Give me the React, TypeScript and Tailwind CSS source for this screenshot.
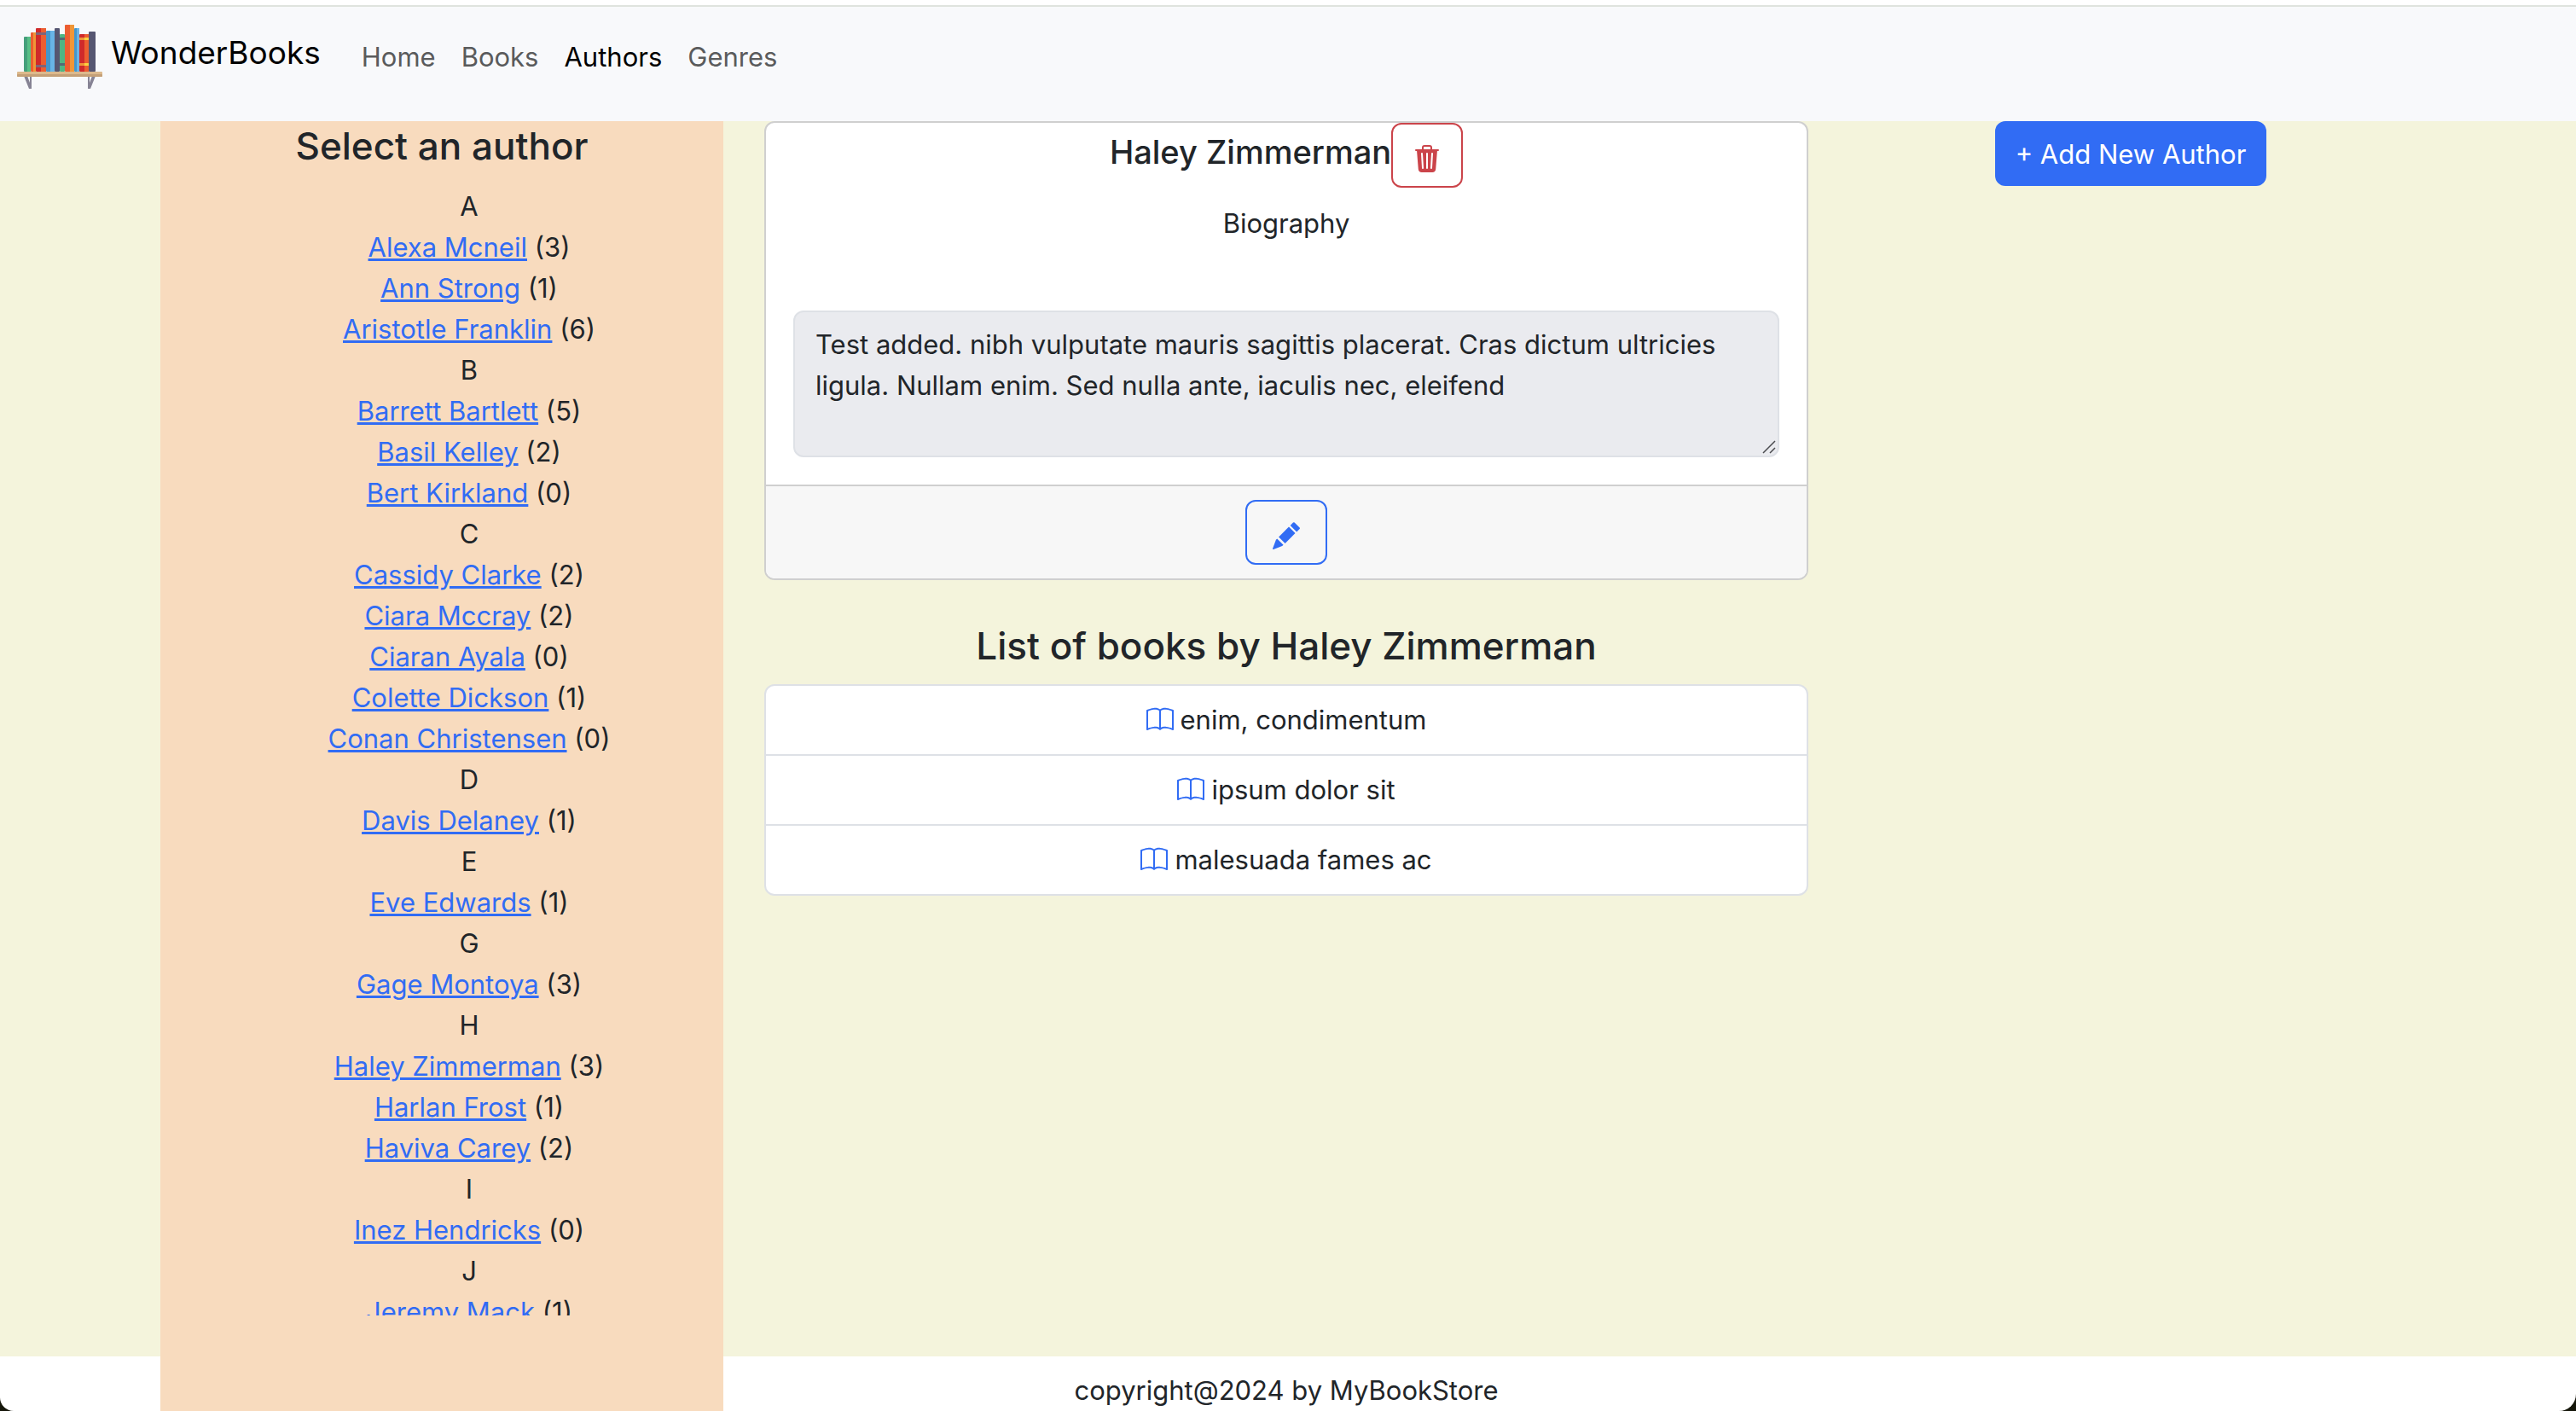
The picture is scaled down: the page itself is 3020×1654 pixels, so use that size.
import { BsBook, BsTrash3Fill } from "react-icons/bs";

type Author = { name: string; books: number };
type AuthorGroup = { letter: string; authors: Author[] };

const navItems = [
  { label: "Home", active: false },
  { label: "Books", active: false },
  { label: "Authors", active: true },
  { label: "Genres", active: false },
];

const groups: AuthorGroup[] = [
  {
    letter: "A",
    authors: [
      { name: "Alexa Mcneil", books: 3 },
      { name: "Ann Strong", books: 1 },
      { name: "Aristotle Franklin", books: 6 },
    ],
  },
  {
    letter: "B",
    authors: [
      { name: "Barrett Bartlett", books: 5 },
      { name: "Basil Kelley", books: 2 },
      { name: "Bert Kirkland", books: 0 },
    ],
  },
  {
    letter: "C",
    authors: [
      { name: "Cassidy Clarke", books: 2 },
      { name: "Ciara Mccray", books: 2 },
      { name: "Ciaran Ayala", books: 0 },
      { name: "Colette Dickson", books: 1 },
      { name: "Conan Christensen", books: 0 },
    ],
  },
  { letter: "D", authors: [{ name: "Davis Delaney", books: 1 }] },
  { letter: "E", authors: [{ name: "Eve Edwards", books: 1 }] },
  { letter: "G", authors: [{ name: "Gage Montoya", books: 3 }] },
  {
    letter: "H",
    authors: [
      { name: "Haley Zimmerman", books: 3 },
      { name: "Harlan Frost", books: 1 },
      { name: "Haviva Carey", books: 2 },
    ],
  },
  { letter: "I", authors: [{ name: "Inez Hendricks", books: 0 }] },
  { letter: "J", authors: [{ name: "Jeremy Mack", books: 1 }] },
];

const books = ["enim, condimentum", "ipsum dolor sit", "malesuada fames ac"];

function ShelfLogo() {
  return (
    <svg viewBox="0 0 100 78" className="h-[78px] w-[100px]" aria-hidden="true">
      <path d="M8 61h4l3 8v-8h2v15h-3z" fill="#868394" />
      <path d="M92 61h-4l-3 8v-8h-2v15h3z" fill="#868394" />
      <rect x="8" y="15" width="8" height="41" rx="1" fill="#459f7b" />
      <rect x="12" y="15" width="4" height="41" fill="#58bf86" />
      <rect x="16" y="10" width="6" height="46" rx="1" fill="#ec5d30" />
      <rect x="19" y="10" width="3" height="46" fill="#f09637" />
      <rect x="22" y="5" width="12" height="51" rx="1" fill="#cf2a2b" />
      <rect x="28" y="5" width="6" height="51" fill="#ec5d30" />
      <path d="M22 10h12v3H22zM22 48h12v3H22z" fill="#7f6478" />
      <rect x="34" y="8" width="10" height="48" rx="1" fill="#4396cb" />
      <rect x="39" y="8" width="5" height="48" fill="#69b4e6" />
      <rect x="44" y="5" width="6" height="51" rx="1" fill="#565671" />
      <rect x="50" y="12" width="6" height="44" rx="1" fill="#4fb583" />
      <path d="M50 16h6v3h-6zM50 46h6v3h-6z" fill="#526a75" />
      <rect x="56" y="1" width="11" height="55" rx="1" fill="#ec5d30" />
      <rect x="62" y="1" width="5" height="55" fill="#f09637" />
      <rect x="67" y="5" width="6" height="51" rx="1" fill="#4396cb" />
      <rect x="70" y="5" width="3" height="51" fill="#69b4e6" />
      <rect x="73" y="12" width="11" height="44" rx="1" fill="#cf2a2b" />
      <rect x="79" y="12" width="5" height="44" fill="#ec5d30" />
      <path d="M73 16h6v3h-6zM73 46h6v3h-6z" fill="#f09637" />
      <path d="M79 16h5v3h-5zM79 46h5v3h-5z" fill="#fbd13f" />
      <rect x="84" y="9" width="8" height="47" rx="1" fill="#565671" />
      <rect x="0" y="56" width="100" height="6" rx="1" fill="#dcb98c" />
      <rect x="0" y="59" width="100" height="3" rx="1" fill="#c4a077" />
    </svg>
  );
}

function PencilIcon() {
  return (
    <svg viewBox="0 0 32 32" className="size-8" fill="currentColor" aria-hidden="true">
      <path d="M24 .6q.8-.8 1.6 0l6 6q.7.7 0 1.5L28.200 11.400 20.700 4z" />
      <path d="M19 5.500 26.500 13 14.600 25 7.100 17.500z" />
      <path d="M5.200 19.400 12.600 26.800 11.200 28 1 31.900Q-.3 32.200.1 31L3.900 20.800z" />
    </svg>
  );
}

function Navbar() {
  return (
    <header className="flex h-[134px] shrink-0 items-start bg-[#f8f9fb] pt-5 pl-5">
      <a href="#" className="mr-12 flex items-start gap-[10px] text-[37px] leading-[68px] text-black">
        <ShelfLogo />
        WonderBooks
      </a>
      <nav className="flex gap-[30px] pt-2 text-[31px] leading-[62px]">
        {navItems.map((item) => (
          <a key={item.label} href="#" className={item.active ? "text-black" : "text-[#5a5b5c]"}>
            {item.label}
          </a>
        ))}
      </nav>
    </header>
  );
}

function AuthorList() {
  return (
    <aside className="relative z-10 h-[calc(100vh-142px)] bg-[#f8dbbe] text-center">
      <div className="h-[calc(100vh-254px)] overflow-x-hidden overflow-y-auto [scrollbar-width:none]">
        <h2 className="mb-[18px] text-[44px] leading-[58px] font-medium">Select an author</h2>
        <ul className="pl-16">
          {groups.map((group) => (
            <li key={group.letter}>
              {group.letter}
              <ul>
                {group.authors.map((author) => (
                  <li key={author.name}>
                    <a href="#" className="text-[#316cf4] underline decoration-[3px] underline-offset-2">
                      {author.name}
                    </a>{" "}
                    ({author.books})
                  </li>
                ))}
              </ul>
            </li>
          ))}
        </ul>
      </div>
    </aside>
  );
}

function AuthorCard() {
  return (
    <article className="overflow-hidden rounded-xl border-2 border-[#cfcfcf] bg-white text-center">
      <div className="flex items-start justify-center">
        <h3 className="pt-1.5 text-[38px] leading-[56px] font-medium">Haley Zimmerman</h3>
        <button
          type="button"
          aria-label="Delete author"
          className="flex h-[76px] items-center rounded-xl border-2 border-[#cb444a] px-6 pt-2 text-[#cb444a]"
        >
          <BsTrash3Fill className="size-8" />
        </button>
      </div>
      <label htmlFor="biography" className="mt-[18px] block">
        Biography
      </label>
      <div className="relative mx-8 mt-[78px] mb-8">
        <textarea
          id="biography"
          readOnly
          rows={3}
          className="block w-full resize-none rounded-xl border-2 border-[#dee1e6] bg-[#eaebef] px-6 pt-[14px] pb-[10px]"
          defaultValue="Test added. nibh vulputate mauris sagittis placerat. Cras dictum ultricies ligula. Nullam enim. Sed nulla ante, iaculis nec, eleifend"
        />
        <svg
          viewBox="0 0 16 16"
          className="pointer-events-none absolute right-1 bottom-1 size-4"
          fill="none"
          stroke="#4b4c4f"
          strokeWidth="1.5"
          aria-hidden="true"
        >
          <path d="M1 15 15 1M9 15l6-6" />
        </svg>
      </div>
      <div className="flex justify-center border-t-2 border-[#cfcfcf] bg-[#f7f7f7] py-4">
        <button
          type="button"
          aria-label="Edit biography"
          className="flex h-[76px] w-24 items-center justify-center rounded-xl border-2 border-[#316cf4] pt-2 text-[#316cf4]"
        >
          <PencilIcon />
        </button>
      </div>
    </article>
  );
}

function BookList() {
  return (
    <section className="mt-12 text-center">
      <h2 className="mb-4 text-[44px] leading-[58px] font-medium">List of books by Haley Zimmerman</h2>
      <ul className="divide-y-2 divide-[#dee1e6] overflow-hidden rounded-xl border-2 border-[#dee1e6] bg-white">
        {books.map((title) => (
          <li key={title} className="flex items-center justify-center gap-2 py-4">
            <BsBook className="size-8 text-[#316cf4]" />
            {title}
          </li>
        ))}
      </ul>
    </section>
  );
}

export default function App() {
  return (
    <div className="h-screen bg-[#15160a]">
      <div className="flex h-full flex-col overflow-hidden rounded-br-[20px] rounded-bl-[16px] bg-white font-['Inter',sans-serif] text-[31px] leading-[48px] text-[#212529]">
        <div className="h-2 shrink-0 border-b-2 border-[#dfe3de]" />
        <Navbar />
        <main className="h-[calc(100vh-206px)] shrink-0 bg-[#f4f4dc] pr-1">
          <div className="mx-auto grid max-w-[2640px] grid-cols-4">
            <AuthorList />
            <div className="col-span-2 px-12">
              <AuthorCard />
              <BookList />
            </div>
            <div className="text-center">
              <button type="button" className="h-[76px] rounded-xl bg-[#316cf4] px-6 pt-0.5 text-white">
                + Add New Author
              </button>
            </div>
          </div>
        </main>
        <footer className="pt-4 pr-1 text-center">copyright@2024 by MyBookStore</footer>
      </div>
    </div>
  );
}
